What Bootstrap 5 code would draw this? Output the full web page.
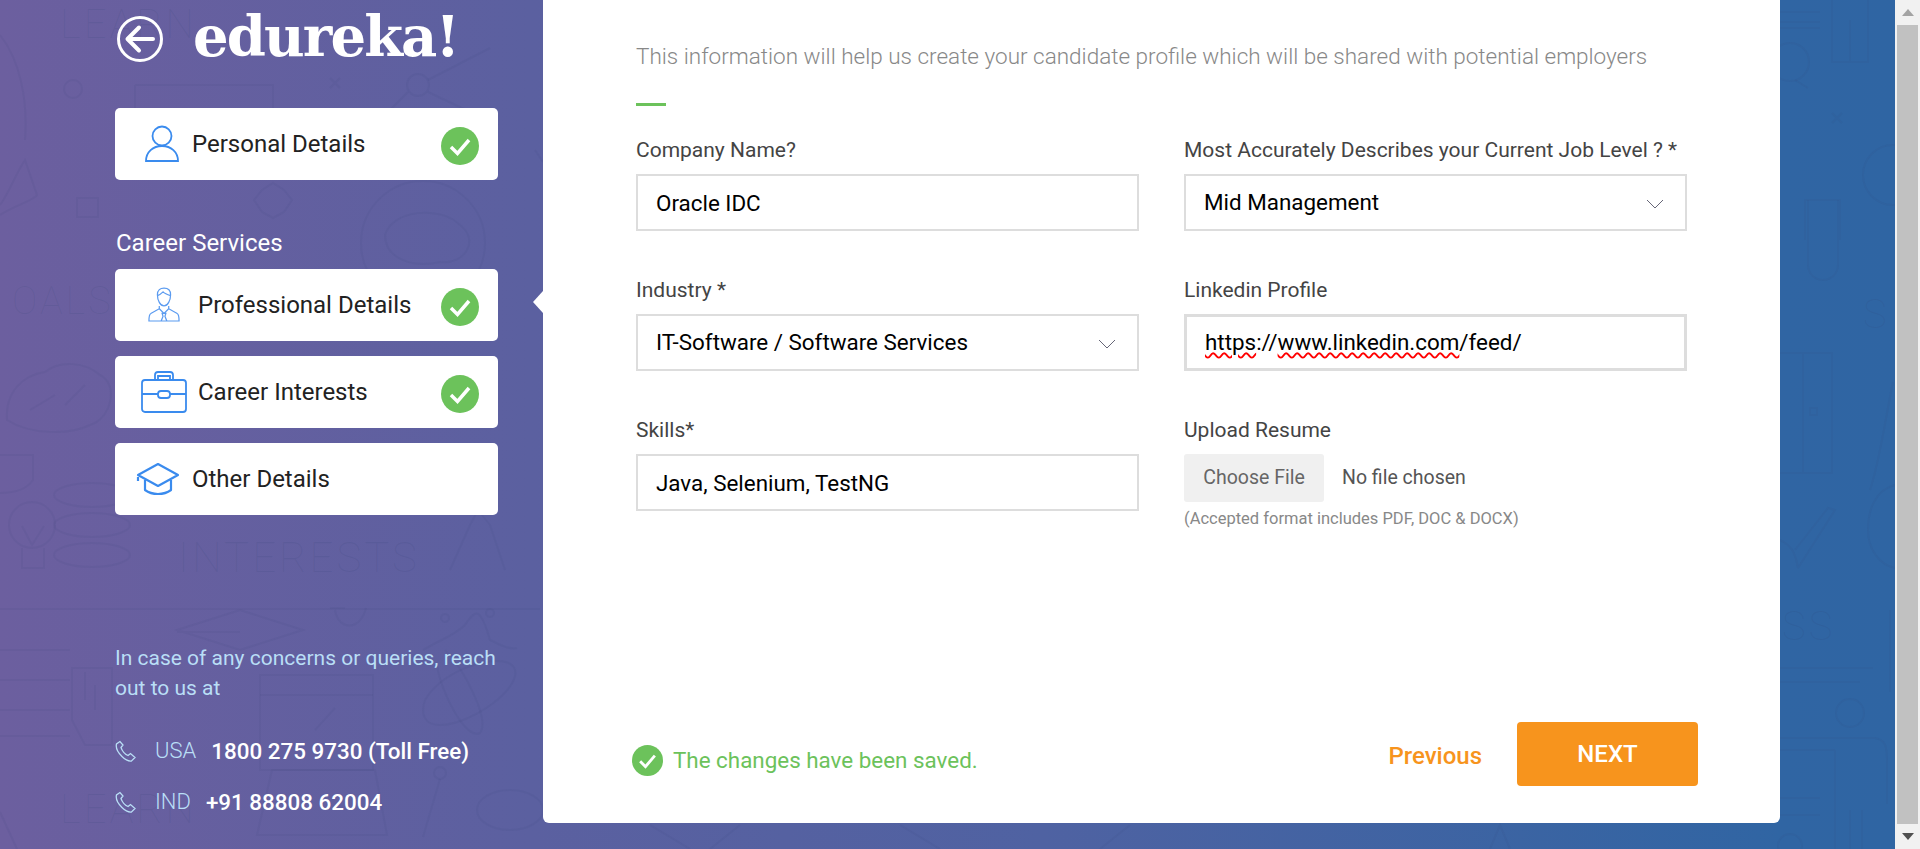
<!DOCTYPE html>
<html lang="en">

<head>
    <meta charset="UTF-8">
    <meta name="viewport" content="width=device-width, initial-scale=1.0">
    <title>edureka! Professional Details</title>
    <link href="https://cdn.jsdelivr.net/npm/bootstrap@5.3.3/dist/css/bootstrap.min.css" rel="stylesheet">
    <style>
        html, body { height: 849px; overflow: hidden; }
        body { font-family: Roboto, "Liberation Sans", sans-serif; color: #444; }
        .page-shell { height: 849px; }
        .page-bg { width: 1895px; background: linear-gradient(90deg, #6c5f9f 0%, #5b60a0 28%, #4f62a2 55%, #3065a3 94%, #2f65a3 100%); }
        .doodles { position: absolute; inset: 0; width: 100%; height: 100%; }
        .doodles * { fill: none; stroke: #2f3f70; stroke-opacity: .08; stroke-width: 2; }
        .doodles text { fill: #2f3f70; fill-opacity: .12; stroke: none; font-family: Roboto, sans-serif; font-weight: 100; font-size: 40px; letter-spacing: 3px; }
        .side-col { width: 383px; margin-left: 115px; margin-right: 45px; z-index: 1; }
        .brand-row { height: 108px; }
        .brand-back { margin-top: 16px; margin-left: 2px; }
        .brand-name { font-family: "DejaVu Serif", serif; font-weight: 700; font-size: 56px; line-height: 72px; letter-spacing: -1.900px; color: #fff; margin-left: 30px; }
        .step-box { height: 72px; border-radius: 5px; background: #fff; color: #222; font-size: 24px; }
        .step-gap { margin-bottom: 15px; }
        .step-icon { width: 77px; padding-right: 12px; }
        .step-icon-wide { width: 83px; padding-left: 14px; }
        .step-check { position: absolute; right: 19px; top: 19px; }
        .side-title { color: #fff; font-size: 24px; line-height: 26px; margin: 50px 0 13px 1px; }
        .help-box { padding-bottom: 22px; }
        .help-text { color: #b9def6; font-size: 21px; line-height: 30px; margin-bottom: 22px; }
        .phone-row { font-size: 22.400px; line-height: 30px; color: #fff; font-weight: 500; height: 51px; }
        .phone-row .where { color: #b9def6; font-size: 22px; font-weight: 300; margin: 0 15px 0 18px; }
        .form-card { width: 1237px; height: 823px; background: #fff; border-radius: 0 0 6px 6px; z-index: 1; padding: 0 93px 0 93px; }
        .form-card::before { content: ""; position: absolute; left: -10px; top: 291px; border: 11px solid transparent; border-left: 0; border-right: 10px solid #fff; }
        .form-intro { font-size: 22.500px; font-weight: 300; color: #888; line-height: 30px; padding-top: 41px; white-space: nowrap; }
        .green-dash { width: 30px; height: 3px; background: #6cc25b; margin: 32px 0 31px; }
        .form-grid { display: grid; grid-template-columns: 503px 503px; column-gap: 45px; row-gap: 0; }
        .field-cell { height: 140px; }
        .field-label { font-size: 21px; line-height: 26px; color: #444; margin-bottom: 11px; display: block; }
        .field-box { height: 57px; border: 2px solid #ddd; border-radius: 0; font-size: 22.400px; color: #000; padding: 0 18px; }
        .field-box:focus { border-color: #ddd; box-shadow: none; color: #000; }
        .linkedin-box { border-width: 3px; }
        .field-arrow { position: absolute; right: 23px; top: 62px; }
        .spell-word { text-decoration: underline wavy #f00; text-decoration-thickness: 1.500px; text-underline-offset: 2px; }
        .pick-file { background: #f0f0f0; color: #666; font-size: 19.500px; width: 140px; height: 48px; border-radius: 3px; }
        .no-file { font-size: 19.500px; color: #555; margin-left: 18px; }
        .file-note { font-size: 16.500px; color: #888; line-height: 20px; margin-top: 7px; }
        .saved-note { font-size: 22.400px; color: #6cc25b; margin-top: 14px; margin-left: -3px; }
        .saved-note svg { margin-right: 10px; }
        .prev-link { color: #f7941d; font-size: 24px; font-weight: 500; text-decoration: none; margin-top: 3px; }
        .next-btn { background: #f7941d; color: #fff; width: 181px; height: 64px; font-size: 24px; font-weight: 500; border-radius: 4px; margin-left: 35px; }
        .next-btn:hover { background: #f7941d; color: #fff; }
        .form-foot { position: absolute; left: 92px; right: 82px; top: 722px; height: 64px; }
        .fake-scroll { width: 25px; background: #f1f1f1; }
        .scroll-thumb { background: #c1c1c1; width: 21px; margin: 0 auto; }
        .scroll-arrow { height: 25px; }
    </style>
</head>

<body>
    <div class="page-shell d-flex">
        <div class="page-bg d-flex position-relative overflow-hidden">
            <!-- faint background doodles -->
            <svg class="doodles" viewBox="0 0 1895 849" aria-hidden="true">
                <text x="60" y="38">LEARN</text>
                <text x="12" y="314" style="font-size:38px">OALS</text>
                <text x="178" y="572" style="font-size:42px">INTERESTS</text>
                <text x="60" y="823">LEARN</text>
                <text x="1863" y="328">S</text>
                <text x="1782" y="640">SS</text>
                <!-- left edge -->
                <path d="M0 35C20 60 28 100 25 140"/>
                <path d="M0 215C15 205 35 200 37 195L25 160C15 175 8 195 0 205"/>
                <circle cx="73" cy="89" r="9"/>
                <rect x="77" y="198" width="21" height="19"/>
                <path d="M7 420C5 390 25 375 45 372C60 360 85 362 100 375C120 385 110 420 90 425C70 435 30 435 7 420zM30 410L55 395M65 405L85 385"/>
                <path d="M0 455H33V480C25 492 10 493 0 493"/>
                <circle cx="32" cy="525" r="23"/>
                <path d="M22 548V568H44V548M22 526L32 545L44 526"/>
                <ellipse cx="92" cy="495" rx="38" ry="12"/>
                <ellipse cx="92" cy="525" rx="38" ry="12"/>
                <ellipse cx="92" cy="555" rx="38" ry="12"/>
                <path d="M0 609H540M0 650H70M0 680H70M0 710H70M0 736H70"/>
                <path d="M72 668H112V745H85L72 720zM85 672V700M95 685V710"/>
                <path d="M0 812L17 849"/>
                <!-- middle column, mostly behind the menu -->
                <path d="M135 85H273V120M135 85V108"/>
                <path d="M330 78L340 88M340 78L330 88"/>
                <circle cx="418" cy="85" r="11"/>
                <path d="M428 80L490 48M408 92L370 130M428 92L498 125M535 150L543 162"/>
                <path d="M262 190L273 183L284 190L292 200L284 212L273 218L262 212L254 200z"/>
                <circle cx="423" cy="243" r="62"/>
                <path d="M385 235C392 210 440 205 460 225C480 240 465 265 440 262C415 268 385 260 385 235z"/>
                <path d="M450 570L470 525M505 570L490 525M470 525L478 510L490 525"/>
                <path d="M177 630L240 610L303 630L240 650zM177 632H240"/>
                <path d="M335 610C338 630 360 632 366 608M330 608H345"/>
                <path d="M423 650C440 640 455 635 465 625C475 610 480 605 490 640C500 645 510 650 517 648"/>
                <circle cx="445" cy="618" r="4"/>
                <circle cx="490" cy="613" r="4"/>
                <rect x="260" y="675" width="113" height="95"/>
                <path d="M260 695H373M315 730L335 708M257 835L272 770H375L387 835zM257 835H387"/>
                <path d="M425 700C445 665 510 650 515 670C520 690 470 725 440 725C425 725 420 715 425 700z"/>
                <path d="M445 650C465 670 490 720 480 733C465 740 440 690 437 665"/>
                <circle cx="440" cy="773" r="6"/>
                <path d="M440 779L423 837"/>
                <ellipse cx="510" cy="810" rx="33" ry="20"/>
                <!-- strip under the card -->
                <path d="M650 825L690 849M710 849L740 825M900 825L940 849M1100 849L1130 825M1490 849L1500 825L1510 849"/>
                <!-- right edge -->
                <path d="M1780 12H1820M1780 22H1820M1780 28H1820"/>
                <path d="M1832 0V62H1868V0M1850 20V62"/>
                <circle cx="1790" cy="62" r="19"/>
                <path d="M1795 80L1808 88"/>
                <path d="M1832 113L1842 123M1842 113L1832 123"/>
                <path d="M1805 240V200H1840V240"/>
                <circle cx="1893" cy="175" r="30"/>
                <path d="M1808 200V265A15 15 0 0 0 1838 265V200"/>
                <path d="M1780 353H1832V473H1780M1803 353V473"/>
                <rect x="1810" y="408" width="7" height="7"/>
                <path d="M1798 568L1835 510L1828 508L1795 550M1780 540C1790 545 1795 550 1798 568"/>
                <path d="M1893 382C1885 420 1880 460 1870 490"/>
                <path d="M1895 485C1875 490 1868 510 1868 530C1868 550 1880 565 1895 568"/>
                <path d="M1890 610V692"/>
                <path d="M1780 668H1873M1780 682H1860"/>
                <circle cx="1850" cy="713" r="14"/>
                <path d="M1780 738H1875C1885 740 1887 745 1887 760V804M1835 750V849M1780 750H1835"/>
                <path d="M1780 798H1820M1780 815H1820M1850 810V849M1862 810V849"/>
                <circle cx="1790" cy="846" r="12"/>
            </svg>

            <aside class="side-col d-flex flex-column position-relative">
                <div class="brand-row d-flex align-items-start">
                    <svg class="brand-back" width="46" height="46" viewBox="0 0 46 46" fill="none" stroke="#fff">
                        <circle cx="23" cy="23" r="21.500" stroke-width="3"/>
                        <path d="M36 23H11M22 11.500L10.500 23 22 34.500" stroke-width="4" stroke-linecap="round" stroke-linejoin="round"/>
                    </svg>
                    <div class="brand-name">edureka!</div>
                </div>

                <div class="step-box position-relative d-flex align-items-center">
                    <span class="step-icon d-flex justify-content-end">
                        <svg width="36" height="38" viewBox="0 0 36 38" fill="none" stroke="#3a8bee" stroke-width="1.800">
                            <circle cx="18" cy="11" r="9.500"/>
                            <path d="M2 36c0-9 7-15 16-15s16 6 16 15z"/>
                        </svg>
                    </span>
                    <span>Personal Details</span>
                    <svg class="step-check" width="38" height="38" viewBox="0 0 38 38"><circle cx="19" cy="19" r="19" fill="#6cc25b"/><path d="M10 20l6.500 6.500L28 13" fill="none" stroke="#fff" stroke-width="3.500"/></svg>
                </div>

                <div class="side-title">Career Services</div>

                <div class="step-box step-gap position-relative d-flex align-items-center">
                    <span class="step-icon-wide d-flex justify-content-center">
                        <svg width="32" height="38" viewBox="0 0 34 38" fill="none" stroke="#5b9bf0" stroke-width="1.300">
                            <path d="M10 8c0-5 3-7 7-7s7 2 7 7c0 6-3 12-7 12s-7-6-7-12zM10 9c3-1 5-3 6-4 2 2 5 3 8 4"/>
                            <path d="M12 20v3L3 28c-2 1-2 4-2 8h32c0-4 0-7-2-8l-9-5v-3M12 23l5 5 5-5M15 28h4l-1 3 2 5h-6l2-5z"/>
                        </svg>
                    </span>
                    <span>Professional Details</span>
                    <svg class="step-check" width="38" height="38" viewBox="0 0 38 38"><circle cx="19" cy="19" r="19" fill="#6cc25b"/><path d="M10 20l6.500 6.500L28 13" fill="none" stroke="#fff" stroke-width="3.500"/></svg>
                </div>

                <div class="step-box step-gap position-relative d-flex align-items-center">
                    <span class="step-icon-wide d-flex justify-content-center">
                        <svg width="46" height="42" viewBox="0 0 46 42" fill="none" stroke="#3a8bee" stroke-width="1.800">
                            <rect x="1" y="9" width="44" height="32" rx="3"/>
                            <path d="M14 9V4c0-2 1-3 3-3h12c2 0 3 1 3 3v5M17 9V5h12v4M1 23h16M29 23h16"/>
                            <rect x="17" y="20" width="12" height="7" rx="3"/>
                        </svg>
                    </span>
                    <span>Career Interests</span>
                    <svg class="step-check" width="38" height="38" viewBox="0 0 38 38"><circle cx="19" cy="19" r="19" fill="#6cc25b"/><path d="M10 20l6.500 6.500L28 13" fill="none" stroke="#fff" stroke-width="3.500"/></svg>
                </div>

                <div class="step-box position-relative d-flex align-items-center">
                    <span class="step-icon d-flex justify-content-end">
                        <svg width="44" height="34" viewBox="0 0 44 34" fill="none" stroke="#3a8bee" stroke-width="2.200" stroke-linejoin="round">
                            <path d="M22 2L42 13 22 24 2 13z"/>
                            <path d="M9 18v10c4 3 9 4 13 4s9-1 13-4V18M2 15v4"/>
                        </svg>
                    </span>
                    <span>Other Details</span>
                </div>

                <div class="help-box mt-auto">
                    <p class="help-text">In case of any concerns or queries, reach out to us at</p>
                    <div class="phone-row d-flex align-items-center">
                        <svg width="22" height="22" viewBox="0 0 22 22" fill="none" stroke="#b9def6" stroke-width="1.300"><path d="M5 1.500L1.500 4c-1 4 2 9 5.500 12.500s6 5 9.500 4.500l3.500-3.500-4.500-4-2.500 2c-3-1-6-5-7-8l2-2.500z"/></svg>
                        <span class="where">USA</span>
                        <span>1800 275 9730 (Toll Free)</span>
                    </div>
                    <div class="phone-row d-flex align-items-center">
                        <svg width="22" height="22" viewBox="0 0 22 22" fill="none" stroke="#b9def6" stroke-width="1.300"><path d="M5 1.500L1.500 4c-1 4 2 9 5.500 12.500s6 5 9.500 4.500l3.500-3.500-4.500-4-2.500 2c-3-1-6-5-7-8l2-2.500z"/></svg>
                        <span class="where">IND</span>
                        <span>+91 88808 62004</span>
                    </div>
                </div>
            </aside>

            <main class="form-card position-relative">
                <p class="form-intro mb-0">This information will help us create your candidate profile which will be shared with potential employers</p>
                <div class="green-dash"></div>

                <div class="form-grid">
                    <div class="field-cell position-relative">
                        <label class="field-label" for="company">Company Name?</label>
                        <input class="form-control field-box" id="company" type="text" value="Oracle IDC">
                    </div>
                    <div class="field-cell position-relative">
                        <label class="field-label">Most Accurately Describes your Current Job Level ? *</label>
                        <div class="field-box d-flex align-items-center">Mid Management</div>
                        <svg class="field-arrow" width="18" height="10" viewBox="0 0 18 10" fill="none" stroke="#667" stroke-width="1"><path d="M1 1l8 8 8-8"/></svg>
                    </div>
                    <div class="field-cell position-relative">
                        <label class="field-label">Industry *</label>
                        <div class="field-box d-flex align-items-center">IT-Software / Software Services</div>
                        <svg class="field-arrow" width="18" height="10" viewBox="0 0 18 10" fill="none" stroke="#667" stroke-width="1"><path d="M1 1l8 8 8-8"/></svg>
                    </div>
                    <div class="field-cell position-relative">
                        <label class="field-label">Linkedin Profile</label>
                        <div class="field-box linkedin-box d-flex align-items-center"><span><span class="spell-word">https</span>://<span class="spell-word">www.linkedin.com</span>/feed/</span></div>
                    </div>
                    <div class="field-cell position-relative">
                        <label class="field-label" for="skills">Skills*</label>
                        <input class="form-control field-box" id="skills" type="text" value="Java, Selenium, TestNG">
                    </div>
                    <div class="field-cell position-relative">
                        <label class="field-label">Upload Resume</label>
                        <div class="d-flex align-items-center">
                            <button class="btn pick-file p-0" type="button">Choose File</button>
                            <span class="no-file">No file chosen</span>
                        </div>
                        <div class="file-note">(Accepted format includes PDF, DOC &amp; DOCX)</div>
                    </div>
                </div>

                <div class="form-foot d-flex align-items-center">
                    <div class="d-flex align-items-center saved-note">
                        <svg width="31" height="31" viewBox="0 0 38 38"><circle cx="19" cy="19" r="19" fill="#6cc25b"/><path d="M10 20l6.500 6.500L28 13" fill="none" stroke="#fff" stroke-width="3.500"/></svg>
                        <span>The changes have been saved.</span>
                    </div>
                    <a class="prev-link ms-auto" href="#">Previous</a>
                    <button class="btn next-btn p-0" type="button">NEXT</button>
                </div>
            </main>
        </div>

        <!-- scrollbar strip of the browser window -->
        <div class="fake-scroll d-flex flex-column">
            <div class="scroll-arrow d-flex align-items-center justify-content-center">
                <svg width="12" height="7" viewBox="0 0 12 7"><path d="M6 0l6 7H0z" fill="#a3a3a3"/></svg>
            </div>
            <div class="scroll-thumb flex-grow-1"></div>
            <div class="scroll-arrow d-flex align-items-center justify-content-center">
                <svg width="12" height="7" viewBox="0 0 12 7"><path d="M0 0h12L6 7z" fill="#505050"/></svg>
            </div>
        </div>
    </div>

    <script src="https://cdn.jsdelivr.net/npm/bootstrap@5.3.3/dist/js/bootstrap.bundle.min.js"></script>
</body>

</html>
